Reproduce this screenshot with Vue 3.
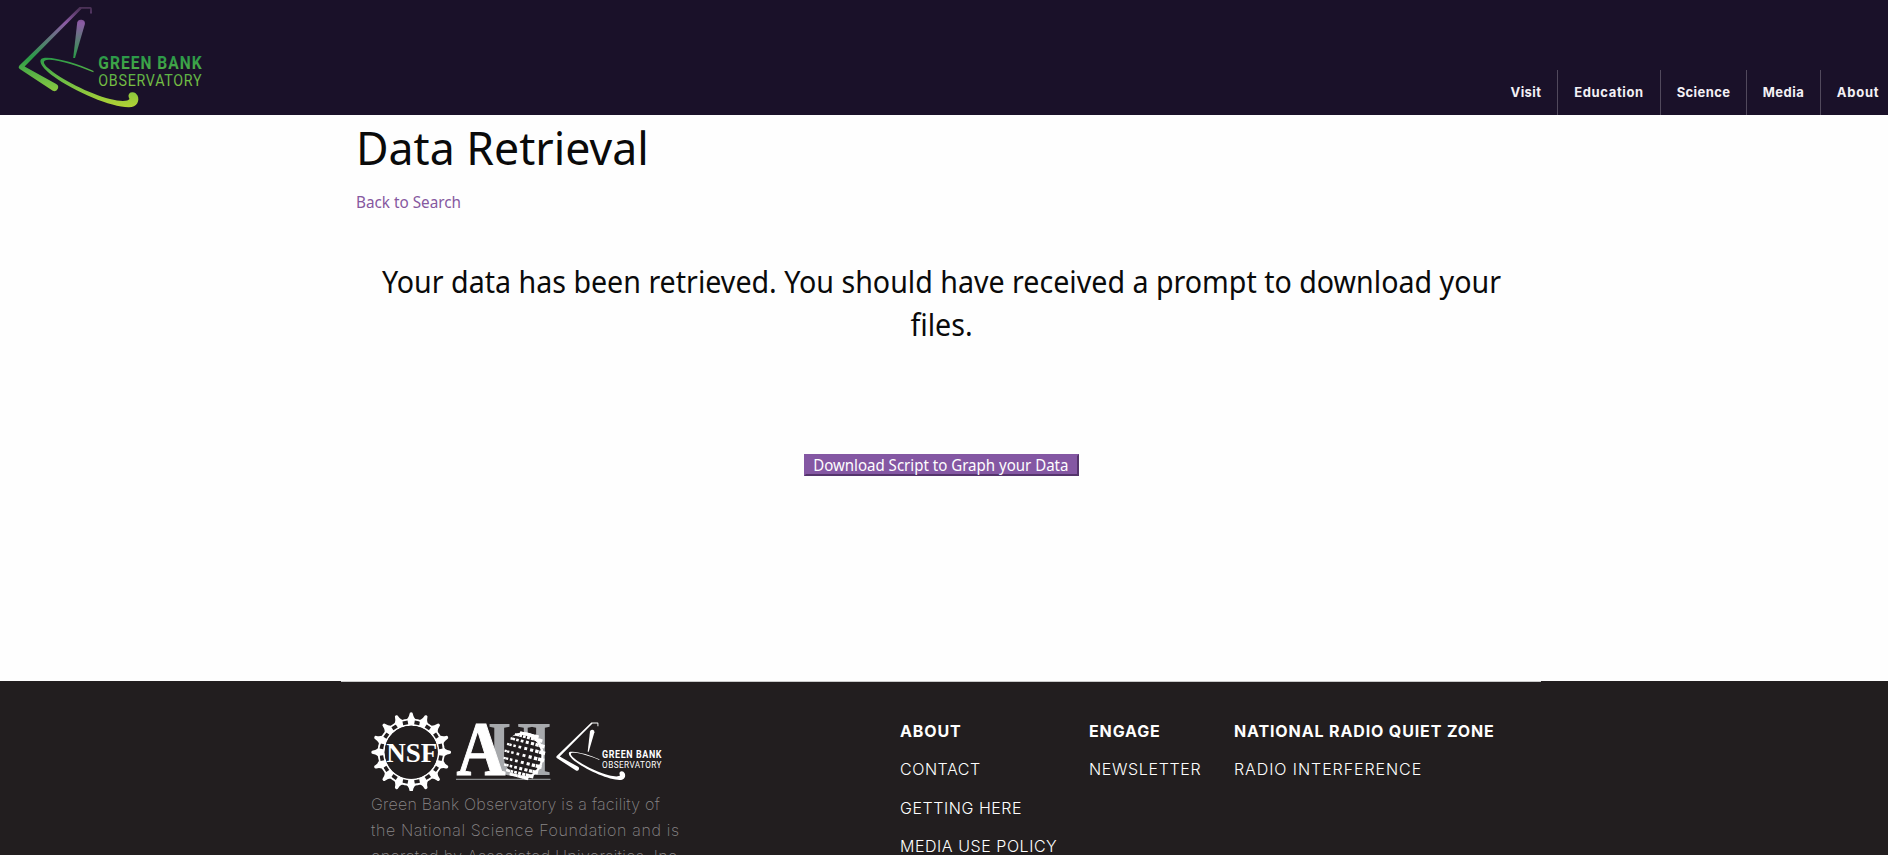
<script setup>
const nav = ['Visit', 'Education', 'Science', 'Media', 'About']
const columns = [
  { key: 'about', title: 'ABOUT', links: ['CONTACT', 'GETTING HERE', 'MEDIA USE POLICY'] },
  { key: 'engage', title: 'ENGAGE', links: ['NEWSLETTER'] },
  { key: 'quiet', title: 'NATIONAL RADIO QUIET ZONE', links: ['RADIO INTERFERENCE'] },
]
const blurb = [
  'Green Bank Observatory is a facility of',
  'the National Science Foundation and is',
  'operated by Associated Universities, Inc.',
]
const teeth = Array.from({ length: 16 }, (_, i) => i * 22.5)

// Dots of the globe: a latitude/longitude grid projected on a sphere, larger towards the lit right side
const dots = []
for (let i = -4; i <= 4; i++) {
  for (let j = -4; j <= 4; j++) {
    const lon = i * 0.33
    const lat = j * 0.33
    const x = 19.5 * Math.sin(lon) * Math.cos(lat * 0.85)
    const y = 22 * Math.sin(lat)
    const size = 2.2 + ((x + 20) / 40) * 1.5
    dots.push({ key: `${i}/${j}`, x: x - size / 2, y: y - size / 2, size })
  }
}
</script>

<template>
  <div class="page">
    <header class="header">
      <svg class="logo" width="220" height="115" viewBox="0 0 220 115">
        <defs>
          <linearGradient id="brand" gradientUnits="userSpaceOnUse" x1="0" y1="8" x2="0" y2="107">
            <stop offset="0" stop-color="#4b3157" />
            <stop offset="0.15" stop-color="#8c5ba5" />
            <stop offset="0.5" stop-color="#2b9a48" />
            <stop offset="0.75" stop-color="#72bf44" />
            <stop offset="1" stop-color="#b2d235" />
          </linearGradient>
          <g id="mark">
            <path d="M91.8 13.5H90.2V8.8H81.6L24.6 66.4L55.8 83.8A3.6 3.6 0 0 1 52.800 90.800L19.400 68.800Q17.800 67.200 19.400 65.400L79.500 7H90.500Q91.800 7.200 91.800 8.600Z" />
            <path d="M77.2 22.8A3.9 3.9 0 0 1 84.9 24L75 58H73.2Z" />
            <path d="M93.4 72.2C78 66 62 60.5 50 59.7C42 59.2 42.500 63 48 68C60 79 90 94 110 99C120 101.500 128 101.500 129.500 99Q127 94.500 130.500 92.500Q135 91 137.500 95.500C140 101 137 107.200 129 107.200C112 107.500 75 92 53 76C42 68 37 59.500 43 58.200C52 56 77 63.500 93.600 71Z" />
            <g transform="translate(98.300 0) scale(0.84 1)">
              <text class="logo-strong" x="0" y="69" textLength="123">GREEN BANK</text>
              <text class="logo-light" x="0" y="86" textLength="123">OBSERVATORY</text>
            </g>
          </g>
        </defs>
        <use href="#mark" fill="url(#brand)" />
      </svg>
      <nav class="nav">
        <a v-for="item in nav" :key="item" :class="item.toLowerCase()"><span>{{ item }}</span></a>
      </nav>
    </header>

    <main class="main">
      <h1>Data Retrieval</h1>
      <a class="back">Back to Search</a>
      <p class="message">Your data has been retrieved. You should have received a prompt to download your files.</p>
      <button class="download"><span>Download Script to Graph your Data</span></button>
    </main>

    <footer class="footer">
      <div class="footer-inner">
        <section class="org">
          <svg class="partners" width="300" height="80" viewBox="370 711 300 80">
            <g transform="translate(411.200 752.200)">
              <circle r="30" fill="none" stroke="#fff" stroke-width="7" />
              <g v-for="a in teeth" :key="a" :transform="`rotate(${a})`">
                <path d="M-6.500 -31.500Q-2.500 -33.500 -1.700 -38.200A1.700 1.700 0 0 1 1.700 -38.200Q2.500 -33.500 6.500 -31.500Z" fill="#fff" />
                <rect x="-2.600" y="-31.700" width="5.200" height="3.600" fill="#221e1f" transform="rotate(11.250)" />
              </g>
              <circle r="26.500" fill="#221e1f" />
              <text class="nsf" x="-25" y="9.500" textLength="51" lengthAdjust="spacingAndGlyphs">NSF</text>
            </g>
            <text class="aui" x="488" y="775" textLength="46" lengthAdjust="spacingAndGlyphs" fill="#a7a9ac">U</text>
            <text class="aui" x="529.500" y="775" textLength="22" lengthAdjust="spacingAndGlyphs" fill="#a7a9ac">I</text>
            <text class="aui strong" x="456.500" y="775" textLength="49" lengthAdjust="spacingAndGlyphs" fill="#fff">A</text>
            <path d="M456 779.300H550.500" stroke="#a7a9ac" />
            <g transform="translate(524 755.500)">
              <ellipse rx="19.500" ry="23" fill="#221e1f" />
              <g transform="rotate(14)" fill="#fff">
                <rect v-for="d in dots" :key="d.key" :x="d.x" :y="d.y" :width="d.size" :height="d.size" />
              </g>
              <path d="M-12 -19C-4 -25 8 -25 15 -15.500C22 -5 21 8 14 16C10 20.500 6 22.500 2 23C12 17 18 9 17.300 -2C16 -16 3 -24 -12 -19Z" fill="#fff" />
            </g>
            <use href="#mark" fill="#fff" transform="translate(545.600 718.400) scale(0.575)" />
          </svg>
          <p class="blurb"><span v-for="line in blurb" :key="line">{{ line }}</span></p>
        </section>
        <section v-for="c in columns" :key="c.key" class="column" :class="c.key">
          <h2>{{ c.title }}</h2>
          <a v-for="l in c.links" :key="l">{{ l }}</a>
        </section>
      </div>
    </footer>
  </div>
</template>

<style>
body { margin: 0; overflow: hidden; }
</style>

<style scoped>
.page { height: 855px; display: flex; flex-direction: column; overflow: hidden; background: #fefefe; font-family: "Noto Sans", sans-serif; color: #0a0a0a; }
.header { height: 115px; flex: none; display: flex; justify-content: space-between; align-items: flex-end; background: #1a1129; }
.logo { display: block; }
.logo-strong { font: 700 18.500px Roboto, sans-serif; }
.logo-light { font: 400 17px Roboto, sans-serif; }
.nav { display: flex; height: 45px; }
.nav a { box-sizing: border-box; border-left: 1px solid #51495c; padding-bottom: 2px; display: flex; align-items: center; justify-content: center; font: 700 13px Inter, sans-serif; letter-spacing: 0.5px; color: #f3f0f5; }
.nav .visit { width: 62px; border: 0; letter-spacing: 0.4px; }
.nav .education { width: 103px; letter-spacing: 0.65px; }
.nav .science { width: 86px; letter-spacing: 0.4px; }
.nav .media { width: 74px; }
.nav .about { width: 68px; padding-left: 7px; letter-spacing: 0.8px; }
.main { box-sizing: border-box; width: 1200px; height: 566px; margin-left: 341px; padding: 0 15px; display: flex; flex-direction: column; align-items: flex-start; }
h1 { margin: 0; font-size: 46px; font-weight: 400; line-height: 64px; transform: scaleX(0.97); transform-origin: left; }
.back { margin-top: 11px; font-size: 16px; line-height: 24px; color: #8658a0; transform: scaleX(0.955); transform-origin: left; }
.message { align-self: center; flex: none; width: 1265px; margin: 46px 0 0; text-align: center; font-size: 31px; line-height: 43px; transform: scaleX(0.923); }
.download { align-self: center; box-sizing: border-box; width: 275px; height: 22px; margin-top: 108px; padding: 0; border: 2px solid; border-color: #8457a3 #54346b #54346b #8457a3; background: #8457a3; color: #fefefe; font: 400 16px/17px "Noto Sans", sans-serif; white-space: nowrap; display: flex; justify-content: center; align-items: center; }
.download span { flex: none; transform: scaleX(0.94); }
.footer { flex: 1; background: #221e1f; }
.footer-inner { box-sizing: border-box; width: 1200px; height: 174px; margin-left: 341px; padding: 29px 0 0 29px; border-top: 1px solid #cacaca; display: flex; font-family: Inter, sans-serif; }
.org { width: 530px; }
.partners { display: block; }
.nsf { font: 700 28px "Liberation Serif", serif; fill: #fff; }
.aui { font: 700 78px "Liberation Serif", serif; }
.aui.strong { stroke: #fff; stroke-width: 1px; }
.blurb { margin: 0 0 0 1px; font-weight: 200; font-size: 16px; line-height: 26px; color: #8a8788; }
.blurb span { display: block; white-space: nowrap; letter-spacing: 0.25px; }
.blurb span:nth-child(2) { letter-spacing: 0.63px; }
.blurb span:nth-child(3) { letter-spacing: 0.35px; }
.column { padding-top: 7px; white-space: nowrap; color: #fefefe; letter-spacing: 0.55px; }
.column.about { width: 189px; }
.column.engage { width: 145px; letter-spacing: 0.65px; }
.column.quiet { letter-spacing: 0.93px; }
h2 { margin: 0 0 12px; font-size: 16px; font-weight: 700; line-height: 26px; letter-spacing: 0.87px; }
.column a { display: block; margin-bottom: 12.500px; font-weight: 300; font-size: 16px; line-height: 26px; }
</style>
